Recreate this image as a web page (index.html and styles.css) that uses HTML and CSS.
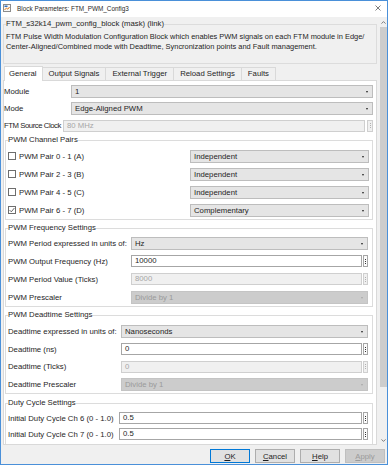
FILE: index.html
```html
<!DOCTYPE html>
<html lang="en">
<head>
    <meta charset="UTF-8">
    <meta name="viewport" content="width=device-width, initial-scale=1.0">
    <title>Block Parameters: FTM_PWM_Config3</title>
    <link rel="stylesheet" href="styles.css">
</head>
<body>
    <!-- dialog window -->
    <div class="window">
        <!-- title bar -->
        <div class="titlebar">
            <svg class="app-icon" width="8" height="8" viewBox="0 0 8 8">
                <rect x="0.5" y="0.5" width="7" height="7" fill="#f7f7f7" stroke="#8c8c8c"/>
                <rect x="1.5" y="1.5" width="3" height="1.5" fill="#2f6fc0"/>
                <path d="M1.5 6 L3.5 4 L4.8 5.2 L6.5 3" fill="none" stroke="#e07b1a" stroke-width="1"/>
            </svg>
            <span class="window-title">Block Parameters: FTM_PWM_Config3</span>
            <svg class="close" width="6" height="6" viewBox="0 0 6 6">
                <path d="M0.5 0.5 L5.5 5.5 M5.5 0.5 L0.5 5.5" stroke="#444" stroke-width="0.7"/>
            </svg>
        </div>

        <!-- scrolling area -->
        <div class="scroll-area">
            <div class="content">
                <!-- block description -->
                <fieldset class="desc">
                    <legend>FTM_s32k14_pwm_config_block (mask) (link)</legend>
                    <p>FTM Pulse Width Modulation Configuration Block which enables PWM signals on each FTM module in Edge/<br>Center-Aligned/Combined mode with Deadtime, Syncronization points and Fault management.</p>
                </fieldset>

                <!-- tabs -->
                <div class="tabs">
                    <div class="tab active">General</div>
                    <div class="tab">Output Signals</div>
                    <div class="tab">External Trigger</div>
                    <div class="tab">Reload Settings</div>
                    <div class="tab">Faults</div>
                </div>

                <!-- tab pane -->
                <div class="pane">
                    <div class="row top">
                        <span class="label">Module</span>
                        <div class="select">1</div>
                    </div>
                    <div class="row top">
                        <span class="label">Mode</span>
                        <div class="select">Edge-Aligned PWM</div>
                    </div>
                    <div class="row top clock">
                        <span class="label">FTM Source Clock</span>
                        <div class="edit">
                            <div class="field disabled">80 MHz</div>
                            <div class="more disabled"><i></i><i></i><i></i></div>
                        </div>
                    </div>

                    <!-- channel pairs -->
                    <fieldset class="group pairs">
                        <legend>PWM Channel Pairs</legend>
                        <div class="row">
                            <label class="check"><span class="box"></span>PWM Pair 0 - 1 (A)</label>
                            <div class="select">Independent</div>
                        </div>
                        <div class="row">
                            <label class="check"><span class="box"></span>PWM Pair 2 - 3 (B)</label>
                            <div class="select">Independent</div>
                        </div>
                        <div class="row">
                            <label class="check"><span class="box"></span>PWM Pair 4 - 5 (C)</label>
                            <div class="select">Independent</div>
                        </div>
                        <div class="row">
                            <label class="check"><span class="box checked"><svg width="6" height="6" viewBox="0 0 6 6"><path d="M0.6 3.1 L2.3 4.8 L5.4 1" fill="none" stroke="#555" stroke-width="0.9"/></svg></span>PWM Pair 6 - 7 (D)</label>
                            <div class="select">Complementary</div>
                        </div>
                    </fieldset>

                    <!-- frequency settings -->
                    <fieldset class="group freq">
                        <legend>PWM Frequency Settings</legend>
                        <div class="row">
                            <span class="label">PWM Period expressed in units of:</span>
                            <div class="select">Hz</div>
                        </div>
                        <div class="row">
                            <span class="label">PWM Output Frequency (Hz)</span>
                            <div class="edit">
                                <div class="field">10000</div>
                                <div class="more"><i></i><i></i><i></i></div>
                            </div>
                        </div>
                        <div class="row">
                            <span class="label">PWM Period Value (Ticks)</span>
                            <div class="edit">
                                <div class="field disabled">8000</div>
                                <div class="more disabled"><i></i><i></i><i></i></div>
                            </div>
                        </div>
                        <div class="row">
                            <span class="label">PWM Prescaler</span>
                            <div class="select disabled">Divide by 1</div>
                        </div>
                    </fieldset>

                    <!-- deadtime settings -->
                    <fieldset class="group dead">
                        <legend>PWM Deadtime Settings</legend>
                        <div class="row">
                            <span class="label">Deadtime expressed in units of:</span>
                            <div class="select">Nanoseconds</div>
                        </div>
                        <div class="row">
                            <span class="label">Deadtime (ns)</span>
                            <div class="edit">
                                <div class="field">0</div>
                                <div class="more"><i></i><i></i><i></i></div>
                            </div>
                        </div>
                        <div class="row">
                            <span class="label">Deadtime (Ticks)</span>
                            <div class="edit">
                                <div class="field disabled">0</div>
                                <div class="more disabled"><i></i><i></i><i></i></div>
                            </div>
                        </div>
                        <div class="row">
                            <span class="label">Deadtime Prescaler</span>
                            <div class="select disabled">Divide by 1</div>
                        </div>
                    </fieldset>

                    <!-- duty cycle settings -->
                    <fieldset class="group duty">
                        <legend>Duty Cycle Settings</legend>
                        <div class="row">
                            <span class="label">Initial Duty Cycle Ch 6 (0 - 1.0)</span>
                            <div class="edit">
                                <div class="field">0.5</div>
                                <div class="more"><i></i><i></i><i></i></div>
                            </div>
                        </div>
                        <div class="row">
                            <span class="label">Initial Duty Cycle Ch 7 (0 - 1.0)</span>
                            <div class="edit">
                                <div class="field">0.5</div>
                                <div class="more"><i></i><i></i><i></i></div>
                            </div>
                        </div>
                    </fieldset>
                </div>
            </div>

            <!-- vertical scrollbar -->
            <div class="scrollbar">
                <svg class="arrow" width="5" height="3" viewBox="0 0 5 3"><path d="M0.5 2.6 L2.5 0.6 L4.5 2.6" fill="none" stroke="#606060" stroke-width="0.8"/></svg>
                <div class="thumb"></div>
                <div class="track"></div>
                <svg class="arrow" width="5" height="3" viewBox="0 0 5 3"><path d="M0.5 0.4 L2.5 2.4 L4.5 0.4" fill="none" stroke="#606060" stroke-width="0.8"/></svg>
            </div>
        </div>

        <!-- dialog buttons -->
        <div class="buttons">
            <button class="btn default"><u>O</u>K</button>
            <button class="btn"><u>C</u>ancel</button>
            <button class="btn"><u>H</u>elp</button>
            <button class="btn" disabled><u>A</u>pply</button>
        </div>
    </div>
</body>
</html>
```

FILE: styles.css
```css
/* page base */
* {
    box-sizing: border-box; /* sizes include border */
}

body {
    margin: 0;
    font-family: "Liberation Sans", Arial, sans-serif;
    font-size: 7.75px;
    color: #1e1e1e;
    background-color: #ffffff;
}

/* window frame */
.window {
    width: 388px;
    height: 465px;
    border: 1px solid #4a90d9; /* blue window edge */
    background-color: #f0f0f0;
    display: flex;
    flex-direction: column;
}

/* title bar */
.titlebar {
    height: 16px;
    flex: none;
    background-color: #ffffff;
    display: flex;
    align-items: center;
    padding: 0 6px 2px 2px;
}

.app-icon {
    margin-right: 6px;
    flex: none;
}

.window-title {
    flex: 1;
    font-size: 6.4px;
    color: #2a2a2a;
}

/* scrolling area */
.scroll-area {
    height: 428px;
    flex: none;
    display: flex;
}

.content {
    width: 378px;
    display: flex;
    flex-direction: column;
}

/* description group */
fieldset {
    min-width: 0;
    margin: 0;
    padding: 0;
}

legend {
    padding: 0;
    line-height: 10px;
}

.desc {
    margin: 2px 2px 0 2px;
    padding: 3px 2px 11px 2px;
    border: 1px solid #dcdcdc;
}

.desc p {
    margin: 0;
    font-size: 7.45px;
    line-height: 10px;
    white-space: nowrap;
}

/* tabs */
.tabs {
    height: 14px;
    flex: none;
    margin: 2px 0 0 3px;
    display: flex;
    align-items: flex-end;
}

.tab {
    height: 13px;
    line-height: 12px;
    padding: 0 6px;
    border: 1px solid #d9d9d9;
    border-bottom: none;
    margin-right: -1px;
    background-color: #f0f0f0;
}

.tab.active {
    height: 15px;
    line-height: 14px;
    padding: 0 5px 0 4px;
    margin-bottom: -1px;
    background-color: #ffffff;
    position: relative;
    z-index: 1; /* covers the pane edge */
}

/* tab pane */
.pane {
    flex: 1;
    min-height: 0;
    overflow: hidden;
    margin: 0 2px;
    padding-top: 2px;
    border: 1px solid #d9d9d9;
    background-color: #ffffff;
}

/* rows */
.row {
    height: 18px;
    display: flex;
    align-items: center;
}

.row.top {
    height: 17px;
    margin-right: 3px;
}

.label {
    flex: none;
    white-space: nowrap;
}

.top .label {
    width: 67px;
}

.top.clock .label {
    width: 59px;
    letter-spacing: -0.45px; /* squeeze to fit */
}

/* drop down */
.select {
    flex: 1;
    height: 13px;
    line-height: 11px;
    padding-left: 3px;
    background-color: #e5e5e5;
    border: 1px solid #bdbdbd;
    position: relative;
}

.select::after {
    content: "";
    position: absolute;
    right: 4px;
    top: 5px;
    border-top: 2px solid #222;
    border-left: 1.5px solid transparent;
    border-right: 1.5px solid transparent;
}

.select.disabled {
    background-color: #cccccc;
    border-color: #c4c4c4;
    color: #9a9a9a;
}

.select.disabled::after {
    border-top-color: #a8a8a8;
}

/* edit field */
.edit {
    flex: 1;
    display: flex;
    gap: 1px;
}

.top .edit {
    gap: 2px;
}

.field {
    flex: 1;
    height: 12px;
    line-height: 10px;
    padding-left: 3px;
    background-color: #ffffff;
    border: 1px solid #a6a6a6;
}

.field.disabled {
    background-color: #f0f0f0;
    border-color: #cfcfcf;
    color: #a6a6a6;
}

.more {
    width: 5px;
    height: 12px;
    flex: none;
    border: 1px solid #a6a6a6;
    background-color: #fbfbfb;
    display: flex;
    flex-direction: column;
    align-items: center;
    justify-content: center;
    gap: 1px;
}

.top .more {
    width: 6px;
}

.more i {
    width: 1px;
    height: 1px;
    background-color: #333;
}

.more.disabled {
    border-color: #cfcfcf;
    background-color: #f0f0f0;
}

.more.disabled i {
    background-color: #b0b0b0;
}

/* group boxes */
.group {
    margin: 1px 3px 0 1px;
    padding: 2px 3px 0 2px;
    border: 1px solid #dcdcdc;
}

.group.freq {
    margin-top: 3px;
    padding-top: 1px;
}

.group.freq .label {
    width: 123px;
}

.group.freq .select,
.group.freq .edit {
    margin-right: 1px;
}

.group.dead {
    margin-top: 3px;
    padding-top: 3px;
}

.group.dead .row {
    height: 17.5px;
}

.group.dead .label {
    width: 113px;
}

.group.dead .select,
.group.dead .edit {
    margin-right: 1px;
}

.group.duty {
    margin-top: 4px;
    padding: 2px 3px 12px 2px; /* runs past the pane bottom */
}

.group.duty .row {
    height: 16px;
}

.group.duty .label {
    width: 111px;
}

.group.duty .edit {
    margin-right: 1px;
}

/* check boxes */
.check {
    width: 182px;
    flex: none;
    display: flex;
    align-items: center;
}

.box {
    width: 8px;
    height: 8px;
    margin-right: 3px;
    border: 1px solid #6d6d6d;
    background-color: #ffffff;
    display: flex;
    align-items: center;
    justify-content: center;
}

/* scrollbar */
.scrollbar {
    width: 8px;
    flex: none;
    display: flex;
    flex-direction: column;
    align-items: center;
    background-color: #f0f0f0;
}

.scrollbar .arrow {
    flex: none;
    margin: 4px 0 3px;
}

.thumb {
    width: 7px;
    height: 360px;
    flex: none;
    background-color: #cdcdcd;
}

.track {
    flex: 1;
}

/* dialog buttons */
.buttons {
    height: 19px;
    flex: none;
    display: flex;
    justify-content: flex-end;
    gap: 5px;
    padding: 4px 2px 0 0;
}

.btn {
    width: 40px;
    height: 14px;
    padding: 0;
    font-family: inherit;
    font-size: 7.75px;
    color: #1e1e1e;
    background-color: #e1e1e1;
    border: 1px solid #adadad;
}

.btn.default {
    border-color: #0078d7; /* default button */
}

.btn:disabled {
    background-color: #cccccc;
    border-color: #bfbfbf;
    color: #9a9a9a;
}
```
